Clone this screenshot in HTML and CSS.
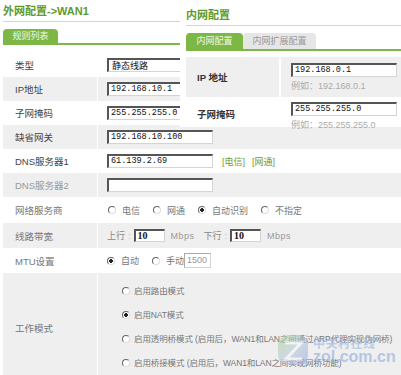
FILE: index.html
```html
<!DOCTYPE html>
<html lang="zh-CN">

<head>
    <meta charset="UTF-8">
    <meta name="viewport" content="width=device-width, initial-scale=1.0">
    <title>外网配置</title>
    <link rel="stylesheet" href="styles.css">
</head>

<body>

    <div class="page">

        <div class="wan">
            <h2 class="title">外网配置-&gt;WAN1</h2>
            <div class="tabs">
                <span class="tab active">规则列表</span>
            </div>

            <div class="form">
                <div class="row">
                    <div class="label dark">类型</div>
                    <div class="value"><span class="field cjk">静态线路</span></div>
                </div>
                <div class="row gray">
                    <div class="label dark">IP地址</div>
                    <div class="value"><span class="field">192.168.10.1</span></div>
                </div>
                <div class="row">
                    <div class="label dark">子网掩码</div>
                    <div class="value"><span class="field">255.255.255.0</span></div>
                </div>
                <div class="row gray">
                    <div class="label dark">缺省网关</div>
                    <div class="value"><span class="field">192.168.10.100</span></div>
                </div>
                <div class="row">
                    <div class="label dark">DNS服务器1</div>
                    <div class="value">
                        <span class="field">61.139.2.69</span>
                        <a class="link" href="#">[电信]</a>
                        <a class="link" href="#">[网通]</a>
                    </div>
                </div>
                <div class="row gray">
                    <div class="label light">DNS服务器2</div>
                    <div class="value"><span class="field"></span></div>
                </div>
                <div class="row tall">
                    <div class="label">网络服务商</div>
                    <div class="value options">
                        <span class="opt"><i class="radio"></i>电信</span>
                        <span class="opt"><i class="radio"></i>网通</span>
                        <span class="opt"><i class="radio on"></i>自动识别</span>
                        <span class="opt"><i class="radio"></i>不指定</span>
                    </div>
                </div>
                <div class="row gray mid">
                    <div class="label">线路带宽</div>
                    <div class="value">
                        <span class="unit">上行<em>:</em></span>
                        <span class="field small num">10</span>
                        <span class="mbps">Mbps</span>
                        <span class="unit">下行<em>:</em></span>
                        <span class="field small num">10</span>
                        <span class="mbps">Mbps</span>
                    </div>
                </div>
                <div class="row mid">
                    <div class="label">MTU设置</div>
                    <div class="value">
                        <span class="opt"><i class="radio on"></i>自动</span>
                        <span class="opt tight"><i class="radio"></i>手动</span>
                        <span class="field mtu">1500</span>
                    </div>
                </div>
                <div class="row gray mode">
                    <div class="label">工作模式</div>
                    <div class="value modes">
                        <span class="opt"><i class="radio"></i>启用路由模式</span>
                        <span class="opt"><i class="radio on"></i>启用NAT模式</span>
                        <span class="opt"><i class="radio"></i>启用透明桥模式 (启用后，WAN1和LAN之间通过ARP代理实现伪网桥)</span>
                        <span class="opt"><i class="radio"></i>启用桥接模式 (启用后，WAN1和LAN之间实现网桥功能)</span>
                    </div>
                </div>
            </div>
        </div>

        <div class="lan">
            <h2 class="title">内网配置</h2>
            <div class="tabs">
                <span class="tab active">内网配置</span>
                <span class="tab">内网扩展配置</span>
            </div>

            <div class="form">
                <div class="row gray lan-ip">
                    <div class="label bold">IP 地址</div>
                    <div class="value stack">
                        <span class="field">192.168.0.1</span>
                        <span class="hint">例如：192.168.0.1</span>
                    </div>
                </div>
                <div class="row lan-mask">
                    <div class="label bold">子网掩码</div>
                    <div class="value stack">
                        <span class="field">255.255.255.0</span>
                        <span class="hint">例如：255.255.255.0</span>
                    </div>
                </div>
            </div>
        </div>

        <div class="watermark">
            <svg class="logo" width="34" height="36" viewBox="0 0 34 36">
                <defs>
                    <linearGradient id="lg" x1="0" y1="0" x2="1" y2="1">
                        <stop offset="0" stop-color="#a6d58a"/>
                        <stop offset="0.5" stop-color="#b4c8d8"/>
                        <stop offset="1" stop-color="#9aa0e0"/>
                    </linearGradient>
                </defs>
                <rect x="2" y="3" width="30" height="30" rx="10" fill="url(#lg)" opacity="0.7"/>
                <path d="M9 11 H25 L10 27 H26" fill="none" stroke="#fff" stroke-width="3" opacity="0.8"/>
            </svg>
            <div class="mark-text">
                <span class="mark-cn">中关村在线</span>
                <span class="mark-en">zol.com.cn</span>
            </div>
        </div>

    </div>

</body>

</html>
```

FILE: styles.css
```css
body {
    margin: 0;
    padding: 0;
    background-color: #fff;
    font-family: "Liberation Sans", "Noto Sans CJK SC", sans-serif;
    font-size: 9.5px;
    color: #555;
}

.page {
    position: relative;
    width: 401px;
    height: 375px;
    overflow: hidden;
}

.wan {
    padding-left: 3px;
}

.title {
    margin: 0;
    padding: 5px 0 4px;
    font-size: 11px;
    line-height: 12px;
    font-weight: bold;
    color: #5f9a2c;
    border-bottom: 1px solid #d2d9c6;
}

.tabs {
    display: flex;
    margin-top: 7px;
    border-bottom: 2px solid #7db847;
}

.tab {
    width: 55px;
    height: 14px;
    line-height: 14px;
    text-align: center;
    font-size: 9px;
    color: #999;
    background-color: #e6e6e6;
    border-radius: 4px 4px 0 0;
}

.tab.active {
    color: #eef7e6;
    background-color: #7db847;
}

.form {
    margin-top: 8px;
}

.row {
    display: grid;
    grid-template-columns: 94px 1fr;
    column-gap: 1px;
    height: 24px;
}

.row.tall {
    height: 26px;
}

.row.mid {
    height: 25px;
}

.row.mode {
    height: 110px;
}

.row.gray .label,
.row.gray .value {
    background-color: #efefef;
}

.label {
    display: flex;
    align-items: center;
    padding-left: 12px;
    color: #777;
}

.label.dark {
    color: #444;
}

.label.light {
    color: #999;
}

.label.bold {
    color: #333;
    font-weight: bold;
}

.value {
    display: flex;
    align-items: center;
    padding-left: 9px;
}

.field {
    box-sizing: border-box;
    display: inline-block;
    flex: none;
    width: 106px;
    height: 14px;
    padding-left: 2px;
    background-color: #fff;
    border: 1px solid #d4d4d4;
    border-top: 2px solid #555;
    border-left: 2px solid #555;
    font-family: "Liberation Mono", monospace;
    font-size: 8.5px;
    line-height: 11px;
    color: #111;
    white-space: nowrap;
}

.field.cjk {
    font-family: "Noto Sans CJK SC", sans-serif;
    font-size: 9px;
    padding-left: 3px;
}

.field.small {
    width: 31px;
    height: 13px;
}

.field.num {
    font-family: "Liberation Serif", serif;
    font-weight: bold;
    font-size: 10px;
    line-height: 10px;
}

.field.mtu {
    width: 27px;
    height: 15px;
    border-top-color: #aaa;
    border-left-color: #aaa;
    border-top-width: 1px;
    border-left-width: 1px;
    color: #999;
    font-family: "Liberation Sans", sans-serif;
    font-size: 9px;
    line-height: 13px;
}

.link {
    margin-left: 9px;
    color: #6d9b3c;
    text-decoration: none;
    font-size: 9px;
}

.link + .link {
    margin-left: 7px;
}

.unit {
    font-size: 9px;
    color: #888;
    margin-right: 3px;
}

.unit em {
    font-style: normal;
    margin-left: 3px;
    color: #bbb;
}

.mbps {
    margin: 0 9px 0 6px;
    color: #999;
    font-size: 9px;
    letter-spacing: 0.5px;
}

.opt {
    display: inline-flex;
    align-items: center;
    margin-right: 13px;
    font-size: 9px;
    color: #777;
    white-space: nowrap;
}

.opt.tight {
    margin-right: 0;
}

.radio {
    box-sizing: border-box;
    display: inline-block;
    width: 8px;
    height: 8px;
    margin-right: 6px;
    border-radius: 50%;
    border: 1px solid;
    border-color: #666 #ddd #ddd #666;
    background-color: #fff;
}

.radio.on {
    background: radial-gradient(circle, #222 0, #222 1.6px, #fff 2px);
}

.value.options {
    padding-left: 10px;
}

.value.modes {
    flex-direction: column;
    align-items: flex-start;
    justify-content: flex-start;
    gap: 12px;
    padding-top: 12px;
    padding-left: 24px;
}

.modes .opt {
    font-size: 8.5px;
    line-height: 12px;
    letter-spacing: -0.1px;
}

.modes .radio {
    margin-right: 4px;
}

.lan {
    position: absolute;
    left: 180px;
    top: 0;
    box-sizing: border-box;
    width: 221px;
    height: 127px;
    padding-left: 6px;
    background-color: #fff;
}

.lan .title {
    padding-top: 9px;
}

.lan .tabs {
    margin-top: 7px;
}

.lan .tab {
    width: 57px;
    height: 16px;
    line-height: 16px;
}

.lan .tab + .tab {
    width: 73px;
}

.lan .form {
    margin-top: 6px;
}

.lan .row {
    grid-template-columns: 93px 1fr;
    column-gap: 2px;
}

.lan .label {
    padding-left: 11px;
}

.lan-ip {
    height: 40px;
}

.lan-mask {
    height: 30px;
}

.value.stack {
    flex-direction: column;
    align-items: flex-start;
    justify-content: center;
    gap: 2px;
    padding-left: 10px;
}

.lan-mask .value.stack {
    justify-content: flex-start;
    padding-top: 5px;
}

.hint {
    font-size: 9px;
    color: #aaa;
}

.watermark {
    position: absolute;
    left: 276px;
    top: 332px;
    display: flex;
    align-items: flex-start;
    opacity: 0.8;
    pointer-events: none;
}

.mark-text {
    display: flex;
    flex-direction: column;
    margin-left: 3px;
    line-height: 1;
}

.mark-cn {
    margin-top: 5px;
    font-family: "Noto Sans CJK SC", sans-serif;
    font-weight: bold;
    font-size: 12px;
    letter-spacing: 0.5px;
    color: rgba(150, 180, 225, 0.75);
}

.mark-en {
    font-weight: bold;
    font-size: 16px;
    color: rgba(140, 170, 220, 0.75);
}
```
